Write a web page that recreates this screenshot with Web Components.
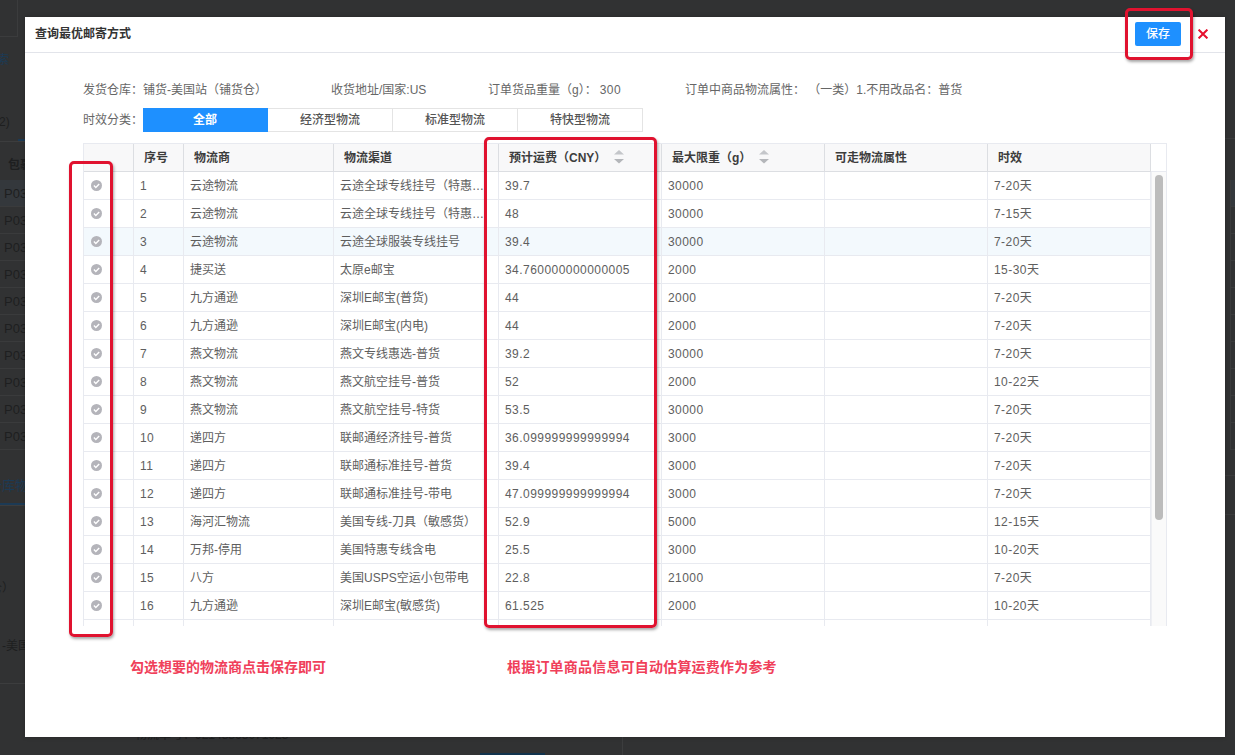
<!DOCTYPE html>
<html lang="zh-CN"><head><meta charset="utf-8"><title>查询最优邮寄方式</title>
<style>
html,body{margin:0;padding:0;height:755px;overflow:hidden;background:#313233}
body{position:relative;font:12px/16px "Liberation Sans","Noto Sans CJK SC",sans-serif;color:#666}
</style></head><body>
<x-backdrop></x-backdrop>
<x-modal heading="查询最优邮寄方式">
  <x-info-bar></x-info-bar>
  <x-tabs label="时效分类：" items="全部,经济型物流,标准型物流,特快型物流"></x-tabs>
  <x-table></x-table>
  <x-notes></x-notes>
</x-modal>
<x-annot style="left:1125px;top:8px;width:68px;height:52px"></x-annot>
<x-annot style="left:69px;top:161px;width:44px;height:476px"></x-annot>
<x-annot style="left:484px;top:137px;width:173px;height:491px"></x-annot>
<script>
function def(name, html, init){
  customElements.define(name, class extends HTMLElement{
    connectedCallback(){
      if(this.shadowRoot) return;
      const r=this.attachShadow({mode:'open'});
      r.innerHTML=typeof html==='function'?html(this):html;
      if(init) init(r,this);
    }
  });
}
def('x-backdrop',()=>{
  let rows='';
  for(let i=0;i<10;i++) rows+=`<div class="r ${i==0?'hl':''}">P03</div>`;
  let rrows='';
  for(let i=0;i<10;i++) rrows+=`<div class="rr ${i==0?'hl':''}" style="height:27px"></div>`;
  return `<style>
  :host{display:flex;justify-content:space-between;position:absolute;inset:0;background:#313233;color:#1e1f20;overflow:hidden}
  .l{width:25px;overflow:hidden;white-space:nowrap}
  .box{height:36px;width:17px;border:1px solid #3b3c3d;border-width:0 1px 1px 0}
  .t{height:20px;line-height:20px}
  .blue{color:#1c3a55}
  .tabline{height:1px;background:#3c3d3e;position:relative}
  .tabline i{position:absolute;left:18px;top:-2px;width:8px;height:2px;background:#1c3a55}
  .tabline.b i{left:0;width:25px}
  .hd{height:38px;line-height:46px;font-weight:700;padding-left:8px;overflow:hidden}
  .r{height:26px;line-height:27px;padding-left:4px;border-bottom:1px solid #3a3b3c;font-size:13px}
  .hl{background:#34383c}
  .m{position:relative;flex:1}
  .m .line{position:absolute;left:597px;top:737px;width:1px;height:18px;background:#3c3d3e}
  .m .btn{position:absolute;left:455px;top:753px;width:65px;height:2px;background:#12344e}
  .m .txt{position:absolute;left:110px;top:727px;white-space:nowrap;font-size:12px;line-height:16px}
  .r2{width:10px;overflow:hidden}
  .rr{border-bottom:1px solid #3a3b3c;box-sizing:border-box}
  .vl{border-left:1px solid #3a3b3c;margin-left:5px}
  </style>
  <div class="l">
    <div class="box"></div>
    <div style="height:13px"></div>
    <div class="t blue" style="margin-left:-15px">搜索</div>
    <div style="height:42px"></div>
    <div class="t" style="margin-left:-5px">(2)</div>
    <div style="height:9px"></div>
    <div class="tabline"><i></i></div>
    <div class="hd">包裹</div>
    ${rows}
    <div style="height:16px"></div>
    <div class="t blue" style="margin-left:-11px;padding-top:10px;font-size:13px">仓库物流</div>
    <div style="height:9px"></div>
    <div class="tabline b"><i></i></div>
    <div style="height:72px"></div>
    <div class="t" style="margin-left:-10px">仓）</div>
    <div style="height:38px"></div>
    <div class="t" style="margin-left:2px">-美国</div>
    <div style="height:27px"></div>
    <div class="tabline"></div>
  </div>
  <div class="m"><div class="txt">物流单号：92148365071923</div><div class="line"></div><div class="btn"></div></div>
  <div class="r2">
    <div style="height:139px;border-bottom:1px solid #3a3b3c;box-sizing:border-box"></div>
    <div style="height:41px"></div>
    <div class="vl">${rrows}</div>
    <div style="height:26px;border-bottom:1px solid #3a3b3c;box-sizing:border-box"></div>
    <div style="height:39px;border-bottom:1px solid #3a3b3c;box-sizing:border-box"></div>
  </div>`;
});
def('x-modal',h=>`<style>
  :host{display:flex;flex-direction:column;position:absolute;left:25px;top:17px;width:1200px;height:720px;background:#fff;box-shadow:0 0 4px rgba(0,0,0,.25)}
  header{box-sizing:border-box;border-bottom:1px solid #e2e4ea;display:flex;align-items:center;padding:0 17px 1px 10px;flex:none;height:36px}
  h1{flex:1;margin:0;font-size:12px;font-weight:700;color:#333;line-height:16px}
  button{all:unset;width:46px;height:24px;background:#1e90ff;border-radius:2px;color:#fff;font-size:12px;font-weight:500;text-align:center;line-height:24px;margin-right:17px;margin-top:-1px}
  svg{display:block;width:10px;height:10px}
  main{padding:28px 58px 0;flex:1;min-height:0}
  </style>
  <header><h1>${h.getAttribute('heading')}</h1><button>保存</button>
  <svg viewBox="0 0 10 10" fill="none" stroke="#e60f2d" stroke-width="2"><path d="M.6.6l8.8 8.8M9.4.6L.6 9.4"/></svg></header>
  <main><slot></slot></main>`);
def('x-info-bar',`<style>
  :host{display:flex;height:16px;line-height:18px;color:#666;white-space:nowrap}
  span.i:nth-of-type(1){width:248px;flex:none}span.i:nth-of-type(2){width:157px;flex:none}span.i:nth-of-type(3){width:197px;flex:none}
  b{font-weight:400;letter-spacing:.45px;margin-left:3px}
  </style><span class="i">发货仓库：铺货-美国站（铺货仓）</span><span class="i">收货地址/国家:US</span><span class="i">订单货品重量（g）：<b>300</b></span><span class="i">订单中商品物流属性： （一类）1.不用改品名：普货</span>`);
def('x-tabs',h=>{
  const items=h.getAttribute('items').split(',');
  return `<style>
  :host{display:flex;align-items:center;margin-top:11px;height:24px;color:#666}
  .lb{width:60px;flex:none}
  .t{width:125px;height:24px;box-sizing:border-box;border:1px solid #e4e4e4;border-left:0;text-align:center;line-height:22px;font-weight:500;color:#555}
  .on{background:#1e90ff;color:#fff;border-color:#1e90ff;font-weight:700}
  </style><div class="lb">${h.getAttribute('label')}</div>`+items.map((x,i)=>`<div class="t ${i==0?'on':''}">${x}</div>`).join('');
});
const DATA=[
['1','云途物流','云途全球专线挂号（特惠…','39.7','30000','7-20天'],
['2','云途物流','云途全球专线挂号（特惠…','48','30000','7-15天'],
['3','云途物流','云途全球服装专线挂号','39.4','30000','7-20天'],
['4','捷买送','太原e邮宝','34.760000000000005','2000','15-30天'],
['5','九方通逊','深圳E邮宝(普货)','44','2000','7-20天'],
['6','九方通逊','深圳E邮宝(内电)','44','2000','7-20天'],
['7','燕文物流','燕文专线惠选-普货','39.2','30000','7-20天'],
['8','燕文物流','燕文航空挂号-普货','52','2000','10-22天'],
['9','燕文物流','燕文航空挂号-特货','53.5','30000','7-20天'],
['10','递四方','联邮通经济挂号-普货','36.099999999999994','3000','7-20天'],
['11','递四方','联邮通标准挂号-普货','39.4','3000','7-20天'],
['12','递四方','联邮通标准挂号-带电','47.099999999999994','3000','7-20天'],
['13','海河汇物流','美国专线-刀具（敏感货）','52.9','5000','12-15天'],
['14','万邦-停用','美国特惠专线含电','25.5','3000','10-20天'],
['15','八方','美国USPS空运小包带电','22.8','21000','7-20天'],
['16','九方通逊','深圳E邮宝(敏感货)','61.525','2000','10-20天']];
const CHECK=`<svg viewBox="0 0 11 11" width="11" height="11"><circle cx="5.5" cy="5.5" r="5.5" fill="#b4b4ba"/><path d="M2.9 5.6l1.9 1.9 3.4-3.6" fill="none" stroke="#fff" stroke-width="1.4"/></svg>`;
const SORT=`<svg class="s" viewBox="0 0 10 14" width="10" height="14"><path d="M5 0l5 4.5H0z" fill="#c4c6ca"/><path d="M0 9h10l-5 4.5z" fill="#b4b6ba"/></svg>`;
def('x-table',()=>{
  const cols='50px 50px 150px 165px 163px 163px 163px 163px';
  const rows=DATA.map((d,i)=>`<div class="row ${i==2?'hov':''}"><div class="c ck">${CHECK}</div><div class="c n">${d[0]}</div><div class="c">${d[1]}</div><div class="c">${d[2]}</div><div class="c n">${d[3]}</div><div class="c n">${d[4]}</div><div class="c"></div><div class="c n">${d[5]}</div></div>`).join('');
  return `<style>
  :host{display:block;margin-top:11px;width:1084px;height:483px;overflow:hidden;border:solid #e8eaf0;border-width:1px 0 0 1px;box-sizing:border-box;color:#5e5e5e;position:relative}
  .h,.row{display:grid;grid-template-columns:${cols};height:28px;box-sizing:border-box}
  .top{display:flex;height:28px}
  .h{background:#f8f8f9;border-bottom:1px solid #dcdee2;font-weight:700;color:#3d3d3d}
  .h>div{border-right:1px solid #dcdee2;padding-left:10px;display:flex;align-items:center;white-space:nowrap}
  .s{flex:none;margin-top:-1px;margin-left:8px}
  .tend{flex:1;border-right:1px solid #e8eaf0;border-bottom:1px solid #e8eaf0;box-sizing:border-box}
  .bodywrap{display:flex}
  .row{border-bottom:1px solid #e8eaf0}
  .hov{background:#f3f9fd}
  .c{border-right:1px solid #e8eaf0;padding-left:6px;line-height:29px;white-space:nowrap;overflow:hidden;box-sizing:border-box}
  .n{letter-spacing:.45px}
  .ck{padding:8px 0 0 7px;line-height:0}
  .ck svg{display:block}
  .bar{flex:1;height:460px;background:#fafafa;border-left:1px solid #eeeff3;border-right:1px solid #e8eaf0;box-sizing:border-box;padding:3px 0 0 3px}
  .bar i{display:block;width:8px;height:345px;border-radius:4px;background:#bcbcbc}
  </style>
  <div class="top"><div class="h"><div></div><div>序号</div><div>物流商</div><div>物流渠道</div><div>预计运费（CNY）${SORT}</div><div>最大限重（g）${SORT}</div><div>可走物流属性</div><div>时效</div></div><div class="tend"></div></div>
  <div class="bodywrap"><div>${rows}<div class="row"><div class="c"></div><div class="c"></div><div class="c"></div><div class="c"></div><div class="c"></div><div class="c"></div><div class="c"></div><div class="c"></div></div></div><div class="bar"><i></i></div></div>`;
});
def('x-notes',`<style>
  :host{display:flex;margin-top:31px;padding-left:47px;height:20px;line-height:20px;font-size:14px;font-weight:700;color:#f0405a;white-space:nowrap}
  span:nth-of-type(1){width:377px;flex:none}
  span:nth-of-type(2){letter-spacing:.2px}
  </style><span>勾选想要的物流商点击保存即可</span><span>根据订单商品信息可自动估算运费作为参考</span>`);
def('x-annot',`<style>
  :host{display:block;position:absolute;box-sizing:border-box;border:3px solid #e0122f;border-radius:5px;box-shadow:1px 2px 3px rgba(0,0,0,.35)}
  </style>`);
</script>
</body></html>
